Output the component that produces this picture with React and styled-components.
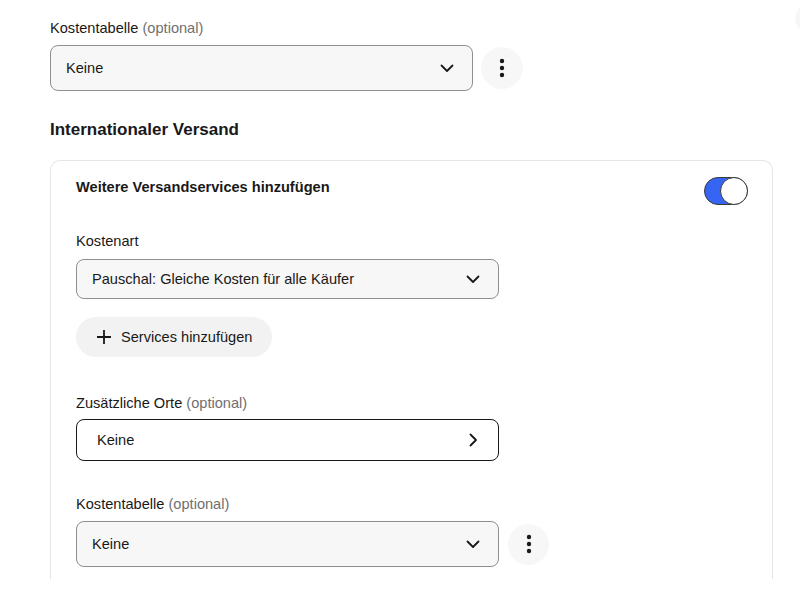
import styled, { createGlobalStyle } from 'styled-components';

const GlobalStyle = createGlobalStyle`
	html, body {
		margin: 0;
		padding: 0;
		background: #fff;
		overflow: hidden;
	}
	body {
		font-family: "Liberation Sans", Arial, sans-serif;
		color: #191919;
	}
`;

const Page = styled.div`
	position: relative;
	width: 800px;
	height: 595px;
	padding: 18px 0 0 50px;
	box-sizing: border-box;
`;

const CornerCircle = styled.div`
	position: absolute;
	left: 795px;
	top: 3px;
	width: 30px;
	height: 30px;
	border-radius: 50%;
	background: #f7f7f7;
`;

const Field = styled.div`
	display: flex;
	flex-direction: column;
	margin-top: ${(p) => p.$top || 0}px;
`;

const Label = styled.div`
	font-size: 14.6px;
	line-height: 20px;
	margin-bottom: ${(p) => p.$gap || 7}px;

	span {
		color: #707070;
	}
`;

const Row = styled.div`
	display: flex;
	align-items: center;
	gap: ${(p) => p.$gap || 8}px;
`;

const Select = styled.div`
	width: 423px;
	height: ${(p) => p.$height || 46}px;
	box-sizing: border-box;
	display: flex;
	align-items: center;
	justify-content: space-between;
	padding: 0 17px 0 ${(p) => p.$padLeft || 15}px;
	border: 1px solid ${(p) => (p.$outline ? '#191919' : '#8f8f8f')};
	border-radius: 8px;
	background: ${(p) => (p.$outline ? '#fff' : '#f7f7f7')};
	font-size: 14.6px;
`;

const IconButton = styled.div`
	width: ${(p) => p.$size || 42}px;
	height: ${(p) => p.$size || 42}px;
	border-radius: 50%;
	background: #f7f7f7;
	display: flex;
	align-items: center;
	justify-content: center;
`;

const Heading = styled.h2`
	margin: 29px 0 20px;
	font-size: 17px;
	line-height: 20px;
	font-weight: 700;
`;

const Card = styled.div`
	width: 723px;
	box-sizing: border-box;
	border: 1px solid #e5e5e5;
	border-bottom: none;
	border-radius: 10px 10px 0 0;
	padding: 16px 24px 12px 25px;
`;

const CardHeader = styled.div`
	display: flex;
	justify-content: space-between;
	align-items: flex-start;
`;

const CardTitle = styled.div`
	font-size: 14.6px;
	line-height: 20px;
	font-weight: 700;
`;

const Toggle = styled.div`
	position: relative;
	width: 44px;
	height: 28px;
	box-sizing: border-box;
	border-radius: 14px;
	background: #3665f3;
	border: 1px solid #3a3a3a;

	&::after {
		content: '';
		position: absolute;
		right: -1px;
		top: -1px;
		width: 28px;
		height: 28px;
		box-sizing: border-box;
		border-radius: 50%;
		background: #fff;
		border: 1.5px solid #3a3a3a;
	}
`;

const PillButton = styled.div`
	margin-top: 18px;
	align-self: flex-start;
	height: 40px;
	box-sizing: border-box;
	padding: 0 20px;
	border-radius: 20px;
	background: #f2f2f2;
	display: flex;
	align-items: center;
	gap: 9px;
	font-size: 14.6px;
`;

const Chevron = ({ dir = 'down' }) => (
	<svg width="16" height="16" viewBox="0 0 16 16" fill="none">
		{dir === 'down' ? (
			<path d="M2.5 5.5 8 11l5.5-5.5" stroke="#191919" strokeWidth="1.8" strokeLinecap="round" strokeLinejoin="round" />
		) : (
			<path d="M5.5 2.5 11 8l-5.5 5.5" stroke="#191919" strokeWidth="1.8" strokeLinecap="round" strokeLinejoin="round" />
		)}
	</svg>
);

const Dots = () => (
	<svg width="6" height="20" viewBox="0 0 6 20">
		<circle cx="3" cy="3" r="2.2" fill="#191919" />
		<circle cx="3" cy="10" r="2.2" fill="#191919" />
		<circle cx="3" cy="17" r="2.2" fill="#191919" />
	</svg>
);

const Plus = () => (
	<svg width="16" height="16" viewBox="0 0 16 16">
		<path d="M8 1v14M1 8h14" stroke="#191919" strokeWidth="1.8" />
	</svg>
);

export default function App() {
	return (
		<Page>
			<GlobalStyle />
			<CornerCircle />
			<Field>
				<Label>
					Kostentabelle <span>(optional)</span>
				</Label>
				<Row>
					<Select $padLeft={15}>
						Keine
						<Chevron />
					</Select>
					<IconButton>
						<Dots />
					</IconButton>
				</Row>
			</Field>

			<Heading>Internationaler Versand</Heading>

			<Card>
				<CardHeader>
					<CardTitle>Weitere Versandservices hinzufügen</CardTitle>
					<Toggle />
				</CardHeader>

				<Field $top={26}>
					<Label $gap={8}>Kostenart</Label>
					<Select $height={40}>
						Pauschal: Gleiche Kosten für alle Käufer
						<Chevron />
					</Select>
					<PillButton>
						<Plus />
						Services hinzufügen
					</PillButton>
				</Field>

				<Field $top={36}>
					<Label $gap={6}>
						Zusätzliche Orte <span>(optional)</span>
					</Label>
					<Select $height={42} $outline $padLeft={20}>
						Keine
						<Chevron dir="right" />
					</Select>
				</Field>

				<Field $top={33}>
					<Label>
						Kostentabelle <span>(optional)</span>
					</Label>
					<Row $gap={9}>
						<Select>
							Keine
							<Chevron />
						</Select>
						<IconButton $size={41}>
							<Dots />
						</IconButton>
					</Row>
				</Field>
			</Card>
		</Page>
	);
}
